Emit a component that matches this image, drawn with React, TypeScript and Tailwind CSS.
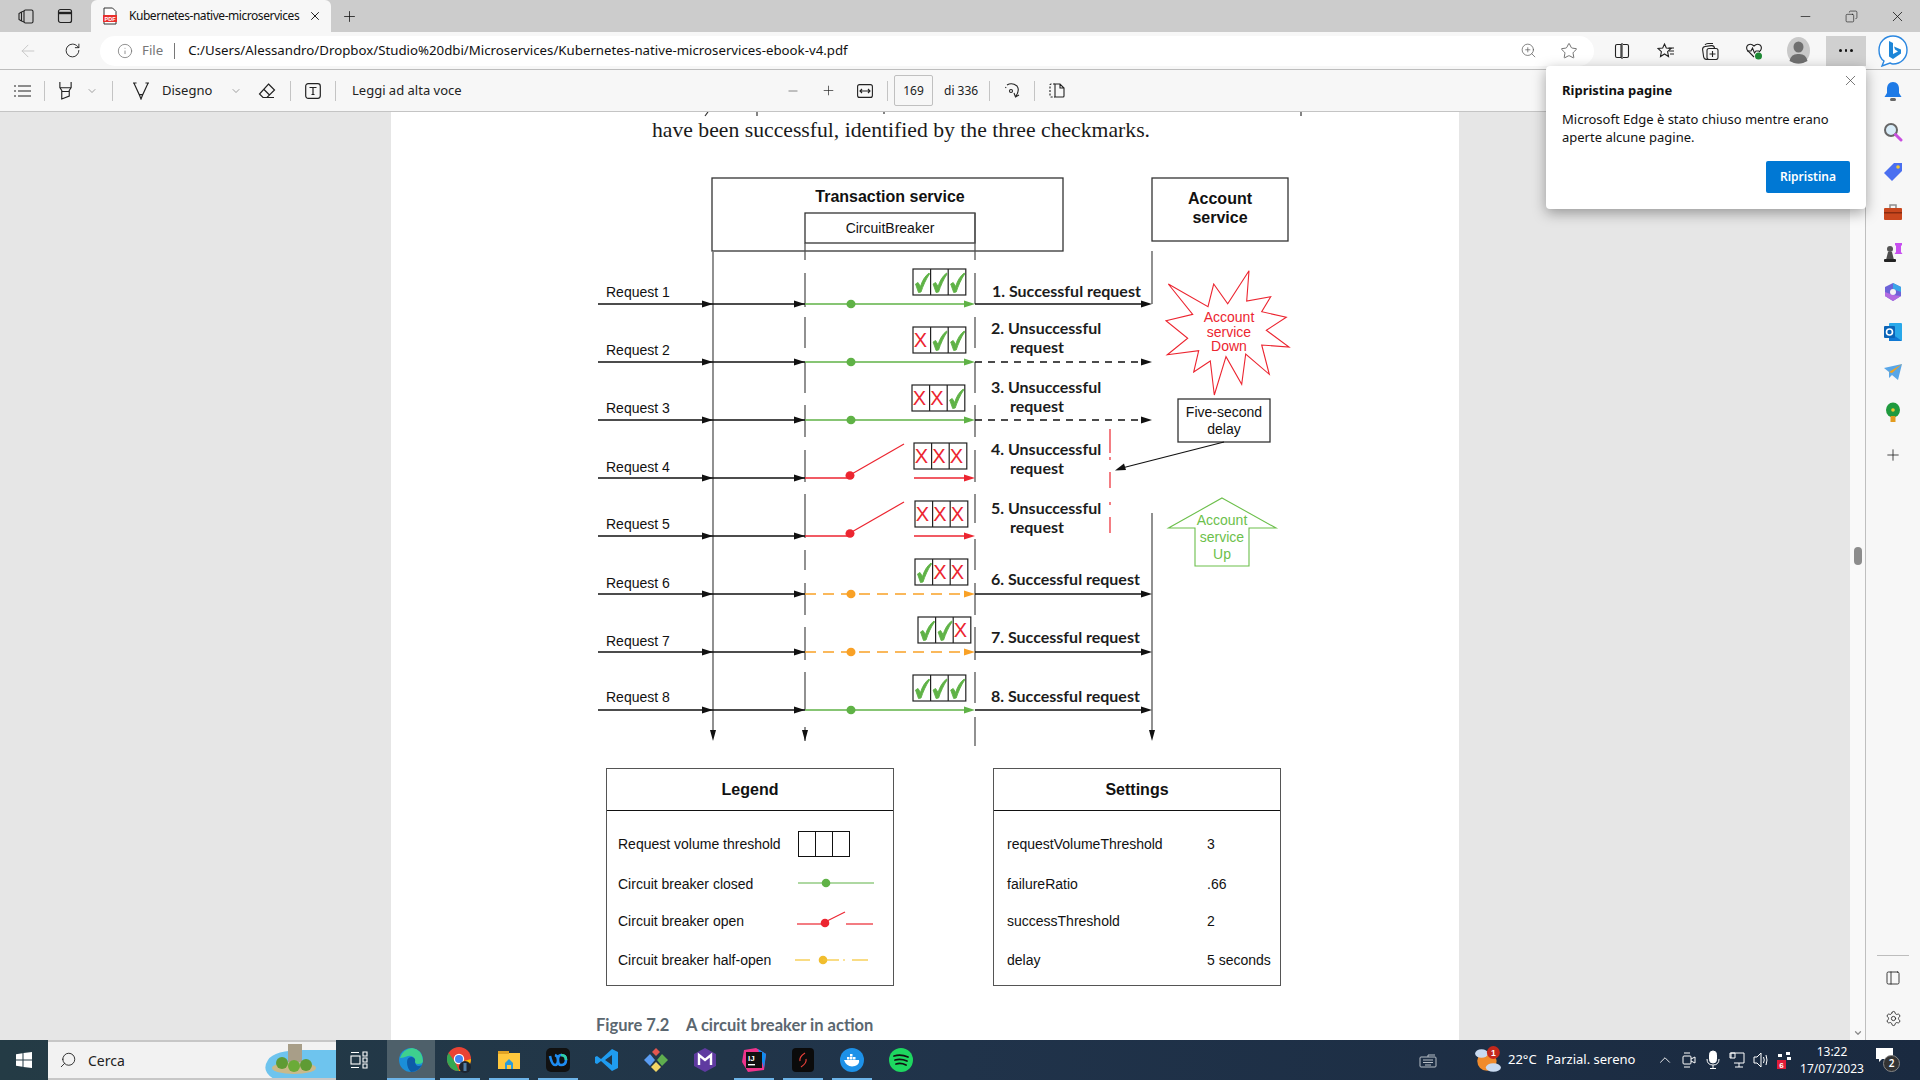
import {
  ArrowLeft,
  ChevronDown,
  ChevronUp,
  Copy,
  Info,
  Minus,
  PanelRight,
  Plus,
  RotateCw,
  Search,
  Settings,
  Star,
  X,
  ZoomIn,
} from 'lucide-react'
import type { ReactNode } from 'react'

const GREEN = '#5fb246'
const RED = '#ec2530'
const ORANGE = '#f9a126'
const LINE = '#111111'
const SANS = '"Liberation Sans", Arial, sans-serif'
const LABEL = 'Lato, "Open Sans", sans-serif'

type Mark = 'c' | 'x'
type Row = {
  y: number
  name: string
  labelY: number
  boxX: number
  boxY: number
  marks: Mark[]
  mode: 'closed' | 'open' | 'half'
  downstream: 'solid' | 'dash'
  lines: { text: string; x: number; y: number }[]
}

const rows: Row[] = [
  { y: 304, name: 'Request 1', labelY: 297, boxX: 913, boxY: 269, marks: ['c', 'c', 'c'], mode: 'closed', downstream: 'solid', lines: [{ text: '1. Successful request', x: 992, y: 297 }] },
  { y: 362, name: 'Request 2', labelY: 355, boxX: 913, boxY: 327, marks: ['x', 'c', 'c'], mode: 'closed', downstream: 'dash', lines: [{ text: '2. Unsuccessful', x: 991, y: 334 }, { text: 'request', x: 1010, y: 353 }] },
  { y: 420, name: 'Request 3', labelY: 413, boxX: 912, boxY: 385, marks: ['x', 'x', 'c'], mode: 'closed', downstream: 'dash', lines: [{ text: '3. Unsuccessful', x: 991, y: 393 }, { text: 'request', x: 1010, y: 412 }] },
  { y: 478, name: 'Request 4', labelY: 472, boxX: 914, boxY: 443, marks: ['x', 'x', 'x'], mode: 'open', downstream: 'solid', lines: [{ text: '4. Unsuccessful', x: 991, y: 455 }, { text: 'request', x: 1010, y: 474 }] },
  { y: 536, name: 'Request 5', labelY: 529, boxX: 915, boxY: 501, marks: ['x', 'x', 'x'], mode: 'open', downstream: 'solid', lines: [{ text: '5. Unsuccessful', x: 991, y: 514 }, { text: 'request', x: 1010, y: 533 }] },
  { y: 594, name: 'Request 6', labelY: 588, boxX: 915, boxY: 559, marks: ['c', 'x', 'x'], mode: 'half', downstream: 'solid', lines: [{ text: '6. Successful request', x: 991, y: 585 }] },
  { y: 652, name: 'Request 7', labelY: 646, boxX: 918, boxY: 617, marks: ['c', 'c', 'x'], mode: 'half', downstream: 'solid', lines: [{ text: '7. Successful request', x: 991, y: 643 }] },
  { y: 710, name: 'Request 8', labelY: 702, boxX: 913, boxY: 675, marks: ['c', 'c', 'c'], mode: 'closed', downstream: 'solid', lines: [{ text: '8. Successful request', x: 991, y: 702 }] },
]

const starPoints = [
  [297, 32], [233, 131], [191, 72], [174, 140], [55, 72], [128, 163], [48, 182], [113, 235],
  [52, 284], [146, 272], [131, 336], [181, 303], [193, 405], [228, 290], [275, 373], [287, 282],
  [358, 343], [335, 255], [417, 261], [349, 211], [409, 172], [335, 155], [362, 110], [290, 123],
]
  .map(([x, y]) => `${(1150 + x / 3).toFixed(1)},${(260 + y / 3).toFixed(1)}`)
  .join(' ')

const breakerDashes = [
  [243, 260], [273, 307], [317, 348], [362, 393], [405, 437], [450, 482], [494, 538], [550, 570],
  [583, 615], [627, 660], [672, 710], [727, 741],
]
const serviceDashes = [
  [213, 260], [273, 304], [317, 348], [362, 393], [405, 437], [450, 482], [494, 523], [539, 570],
  [583, 615], [627, 660], [672, 703], [717, 746],
]

const ArrowHead = ({ x, y, color }: { x: number; y: number; color: string }) => (
  <polygon points={`${x},${y} ${x - 11},${y - 3.5} ${x - 11},${y + 3.5}`} fill={color} />
)

const DownHead = ({ x, y }: { x: number; y: number }) => (
  <polygon points={`${x},${y} ${x - 3},${y - 11} ${x + 3},${y - 11}`} fill={LINE} />
)

const Check = ({ x, y }: { x: number; y: number }) => (
  <path
    d={`M${x + 2.5} ${y + 15} l2.5 -1.5 l2.5 4 C${x + 9} ${y + 12} ${x + 12} ${y + 7} ${x + 16} ${y + 4} l0.5 1 C${x + 13} ${y + 10} ${x + 10} ${y + 17} ${x + 8} ${y + 23} l-2.5 0.5 z`}
    fill={GREEN}
    stroke={GREEN}
    strokeWidth={0.9}
    strokeLinejoin="round"
  />
)

const MarkBox = ({ x, y, marks, w = 17.6, h = 26 }: { x: number; y: number; marks: Mark[]; w?: number; h?: number }) => (
  <g>
    <rect x={x} y={y} width={w * 3} height={h} fill="#fff" stroke="#222" strokeWidth={1.2} />
    <line x1={x + w} x2={x + w} y1={y} y2={y + h} stroke="#222" strokeWidth={1.2} />
    <line x1={x + w * 2} x2={x + w * 2} y1={y} y2={y + h} stroke="#222" strokeWidth={1.2} />
    {marks.map((mark, idx) =>
      mark === 'c' ? (
        <Check key={idx} x={x + idx * w} y={y} />
      ) : (
        <text key={idx} x={x + idx * w + w / 2 - 1.5} y={y + 20} fontSize={20} textAnchor="middle" fill={RED} fontFamily={SANS}>
          X
        </text>
      ),
    )}
  </g>
)

const Diagram = () => (
  <svg width={1068} height={602} viewBox="391 160 1068 602" className="block" fontFamily={SANS}>
    <rect x={712} y={178} width={351} height={73} fill="none" stroke="#333" strokeWidth={1.3} />
    <text x={890} y={201.5} fontSize={16} fontWeight={700} textAnchor="middle" fill="#111">Transaction service</text>
    <rect x={805} y={213} width={170} height={30} fill="none" stroke="#333" strokeWidth={1.3} />
    <text x={890} y={233} fontSize={14} textAnchor="middle" fill="#111">CircuitBreaker</text>
    <rect x={1152} y={178} width={136} height={63} fill="none" stroke="#333" strokeWidth={1.3} />
    <text x={1220} y={204} fontSize={16} fontWeight={700} textAnchor="middle" fill="#111">Account</text>
    <text x={1220} y={223} fontSize={16} fontWeight={700} textAnchor="middle" fill="#111">service</text>

    {/* lifelines */}
    <line x1={713} x2={713} y1={252} y2={735} stroke="#555" strokeWidth={1.3} />
    <DownHead x={713} y={741} />
    {breakerDashes.map(([a, b]) => (
      <line key={a} x1={805} x2={805} y1={a} y2={b} stroke="#555" strokeWidth={1.3} />
    ))}
    <DownHead x={805} y={741} />
    {serviceDashes.map(([a, b]) => (
      <line key={a} x1={975} x2={975} y1={a} y2={b} stroke="#555" strokeWidth={1.3} />
    ))}
    <line x1={1152} x2={1152} y1={251} y2={304} stroke="#555" strokeWidth={1.3} />
    <line x1={1152} x2={1152} y1={513} y2={735} stroke="#555" strokeWidth={1.3} />
    <DownHead x={1152} y={741} />

    {rows.map((row) => (
      <g key={row.name}>
        <text x={606} y={row.labelY} fontSize={14} fill="#111">{row.name}</text>
        <line x1={598} x2={805} y1={row.y} y2={row.y} stroke={LINE} strokeWidth={1.3} />
        <ArrowHead x={713} y={row.y} color={LINE} />
        <ArrowHead x={805} y={row.y} color={LINE} />
        {row.mode === 'closed' && (
          <>
            <line x1={805} x2={968} y1={row.y} y2={row.y} stroke={GREEN} strokeWidth={1.6} />
            <ArrowHead x={975} y={row.y} color={GREEN} />
            <ellipse cx={851} cy={row.y} rx={4.5} ry={4.3} fill={GREEN} />
          </>
        )}
        {row.mode === 'half' && (
          <>
            <line x1={805} x2={968} y1={row.y} y2={row.y} stroke={ORANGE} strokeWidth={1.6} strokeDasharray="11 7" />
            <ArrowHead x={975} y={row.y} color={ORANGE} />
            <ellipse cx={851} cy={row.y} rx={4.5} ry={4.3} fill={ORANGE} />
          </>
        )}
        {row.mode === 'open' && (
          <>
            <line x1={805} x2={848} y1={row.y} y2={row.y} stroke={RED} strokeWidth={1.4} />
            <line x1={850} x2={904} y1={row.y - 3} y2={row.y - 34} stroke={RED} strokeWidth={1.2} />
            <ellipse cx={850} cy={row.y - 2.5} rx={4.5} ry={4.3} fill={RED} />
            <line x1={914} x2={968} y1={row.y} y2={row.y} stroke={RED} strokeWidth={1.4} />
            <ArrowHead x={975} y={row.y} color={RED} />
          </>
        )}
        <MarkBox x={row.boxX} y={row.boxY} marks={row.marks} />
        {row.mode !== 'open' && (
          <>
            <line
              x1={975}
              x2={1145}
              y1={row.y}
              y2={row.y}
              stroke={LINE}
              strokeWidth={1.3}
              strokeDasharray={row.downstream === 'dash' ? '7 6' : undefined}
            />
            <ArrowHead x={1152} y={row.y} color={LINE} />
          </>
        )}
        {row.lines.map((line) => (
          <text key={line.text} x={line.x} y={line.y} fontSize={16} fontWeight={700} fontFamily={LABEL} fill="#1c1c1c">
            {line.text}
          </text>
        ))}
      </g>
    ))}

    {/* red dashed barrier */}
    {[[429, 453], [457, 460], [472, 488], [502, 505], [517, 533]].map(([a, b]) => (
      <line key={a} x1={1110} x2={1110} y1={a} y2={b} stroke={RED} strokeWidth={1.2} />
    ))}

    <polygon points={starPoints} fill="#fff" stroke={RED} strokeWidth={1.1} />
    <text x={1229} y={322} fontSize={14} textAnchor="middle" fill={RED}>Account</text>
    <text x={1229} y={337} fontSize={14} textAnchor="middle" fill={RED}>service</text>
    <text x={1229} y={351} fontSize={14} textAnchor="middle" fill={RED}>Down</text>

    <rect x={1178} y={399} width={92} height={43} fill="#fff" stroke="#333" strokeWidth={1.3} />
    <text x={1224} y={417} fontSize={14} textAnchor="middle" fill="#111">Five-second</text>
    <text x={1224} y={434} fontSize={14} textAnchor="middle" fill="#111">delay</text>
    <line x1={1224} x2={1122} y1={442} y2={468} stroke={LINE} strokeWidth={1.2} />
    <polygon points="1115,470.5 1124,463.5 1126,470" fill={LINE} />

    <polygon
      points="1222,498 1276,528 1249,528 1249,566 1195,566 1195,528 1168.5,528"
      fill="#fff"
      stroke="#6cbf4b"
      strokeWidth={1.1}
    />
    <text x={1222} y={525} fontSize={14} textAnchor="middle" fill="#6cbf4b">Account</text>
    <text x={1222} y={542} fontSize={14} textAnchor="middle" fill="#6cbf4b">service</text>
    <text x={1222} y={559} fontSize={14} textAnchor="middle" fill="#6cbf4b">Up</text>
  </svg>
)

const PanelBox = ({ title, children }: { title: string; children: ReactNode }) => (
  <div className="w-[288px] h-[218px] border-[1.5px] border-[#555] flex flex-col">
    <div className="h-[42px] shrink-0 border-b-[1.5px] border-[#111] flex items-center justify-center text-[16px] font-bold text-[#111]">
      {title}
    </div>
    {children}
  </div>
)

const Legend = () => (
  <PanelBox title="Legend">
    <div className="pl-[11px] text-[14px] text-[#111] flex flex-col">
      <div className="h-[26px] mt-[20px] flex items-center justify-between pr-[43px]">
        <span>Request volume threshold</span>
        <div className="flex w-[52px] h-[26px] border border-[#111]">
          <div className="flex-1 border-r border-[#111]" />
          <div className="flex-1 border-r border-[#111]" />
          <div className="flex-1" />
        </div>
      </div>
      <div className="mt-[14px] h-[26px] flex items-center justify-between pr-[19px]">
        <span>Circuit breaker closed</span>
        <svg width={76} height={14} viewBox="0 0 76 14">
          <line x1={0} x2={76} y1={6} y2={6} stroke={GREEN} strokeWidth={1.2} />
          <circle cx={28} cy={6} r={4.3} fill={GREEN} />
        </svg>
      </div>
      <div className="mt-[11px] h-[26px] flex items-center justify-between pr-[20px]">
        <span>Circuit breaker open</span>
        <svg width={76} height={20} viewBox="0 0 76 20">
          <line x1={0} x2={26} y1={13} y2={13} stroke={RED} strokeWidth={1.2} />
          <line x1={28} x2={48} y1={11} y2={1} stroke={RED} strokeWidth={1.2} />
          <circle cx={28} cy={12} r={4.3} fill={RED} />
          <line x1={49} x2={76} y1={13} y2={13} stroke={RED} strokeWidth={1.2} />
        </svg>
      </div>
      <div className="mt-[13px] h-[26px] flex items-center justify-between pr-[25px]">
        <span>Circuit breaker half-open</span>
        <svg width={73} height={14} viewBox="0 0 73 14">
          <line x1={0} x2={15} y1={7} y2={7} stroke="#f5c533" strokeWidth={1.2} />
          <circle cx={28} cy={7} r={4.3} fill="#f1bd2d" />
          <line x1={28} x2={44} y1={7} y2={7} stroke="#f5c533" strokeWidth={1.2} />
          <line x1={48} x2={50} y1={7} y2={7} stroke="#f5c533" strokeWidth={1.2} />
          <line x1={57} x2={73} y1={7} y2={7} stroke="#f5c533" strokeWidth={1.2} />
        </svg>
      </div>
    </div>
  </PanelBox>
)

const settingsRows = [
  { name: 'requestVolumeThreshold', value: '3', mt: 'mt-[20px]' },
  { name: 'failureRatio', value: '.66', mt: 'mt-[14px]' },
  { name: 'successThreshold', value: '2', mt: 'mt-[11px]' },
  { name: 'delay', value: '5 seconds', mt: 'mt-[13px]' },
]

const SettingsBox = () => (
  <PanelBox title="Settings">
    <div className="pl-[13px] text-[14px] text-[#111] flex flex-col">
      {settingsRows.map((row) => (
        <div key={row.name} className={`h-[26px] flex items-center ${row.mt}`}>
          <span className="w-[200px]">{row.name}</span>
          <span>{row.value}</span>
        </div>
      ))}
    </div>
  </PanelBox>
)

const Sep = ({ className = '' }: { className?: string }) => <div className={`w-px h-[20px] bg-[#c4c4c4] ${className}`} />

const IconSlot = ({ w, className = '', children }: { w: number; className?: string; children: ReactNode }) => (
  <div className={`shrink-0 flex items-center justify-center ${className}`} style={{ width: w }}>
    {children}
  </div>
)

const TabBar = () => (
  <div className="h-[32px] bg-[#cccccc] flex items-end shrink-0 relative">
    <IconSlot w={45} className="h-[32px] pl-[6px]">
      <svg width={18} height={18} viewBox="0 0 18 18" fill="none" stroke="#222" strokeWidth={1.1}>
        <rect x={7} y={3} width={9} height={13} rx={1.5} />
        <path d="M7 4 L4.5 5 V14 L7 15 M4.5 5 L2 6.5 V12.5 L4.5 14" />
      </svg>
    </IconSlot>
    <IconSlot w={40} className="h-[32px]">
      <svg width={16} height={16} viewBox="0 0 16 16" fill="none" stroke="#222" strokeWidth={1.2}>
        <rect x={1.5} y={1.5} width={13} height={13} rx={2} />
        <path d="M1.5 5 H14.5" strokeWidth={2.4} />
      </svg>
    </IconSlot>
    <div className="ml-[6px] w-[240px] h-[32px] bg-[#f7f7f7] rounded-t-[6px] flex items-center pl-[11px] font-['Noto_Sans'] text-[12px] text-[#111]">
      <svg width={16} height={18} viewBox="0 0 16 18" className="shrink-0">
        <path d="M2 1 H10.5 L14 4.5 V17 H2 Z" fill="#fff" stroke="#333" strokeWidth={1} />
        <rect x={1} y={8} width={14} height={7} fill="#e8302d" />
        <text x={8} y={13.6} fontSize={5.5} fontWeight={700} fill="#fff" textAnchor="middle" fontFamily={SANS}>PDF</text>
      </svg>
      <span className="ml-[11px] w-[172px] whitespace-nowrap tracking-[-0.45px]">Kubernetes-native-microservices</span>
      <X size={14} strokeWidth={1.6} className="ml-[7px] text-[#111]" />
    </div>
    <IconSlot w={36} className="h-[32px]">
      <Plus size={17} strokeWidth={1.1} className="text-[#111]" />
    </IconSlot>
    <div className="ml-auto flex h-[32px] items-center text-[#111]">
      <IconSlot w={46}><Minus size={15} strokeWidth={1.1} /></IconSlot>
      <IconSlot w={46}><Copy size={13} strokeWidth={1.1} className="-scale-x-100" /></IconSlot>
      <IconSlot w={46}><X size={17} strokeWidth={1.1} /></IconSlot>
    </div>
  </div>
)

const AddressBar = () => (
  <div className="h-[38px] bg-[#f7f7f7] flex items-center shrink-0 border-b border-[#bdbdbd]">
    <IconSlot w={54} className="pl-[2px]"><ArrowLeft size={20} strokeWidth={1.1} className="text-[#c4c4c4]" /></IconSlot>
    <IconSlot w={36}><RotateCw size={17} strokeWidth={1.3} className="text-[#222]" /></IconSlot>
    <div className="ml-[10px] w-[1498px] h-[30px] rounded-full bg-white flex items-center font-['Noto_Sans'] text-[13.25px] text-[#111] whitespace-nowrap">
      <Info size={16} strokeWidth={1.2} className="ml-[17px] text-[#777] shrink-0" />
      <span className="ml-[9px] text-[#777]">File</span>
      <div className="ml-[11px] w-px h-[16px] bg-[#777]" />
      <span className="ml-[13px]">C:/Users/Alessandro/Dropbox/Studio%20dbi/Microservices/Kubernetes-native-microservices-ebook-v4.pdf</span>
      <ZoomIn size={17} strokeWidth={1} className="ml-auto text-[#555] shrink-0" />
      <Star size={18} strokeWidth={1} className="ml-[23px] mr-[16px] text-[#444] shrink-0" />
    </div>
    <IconSlot w={56}>
      <svg width={16} height={16} viewBox="0 0 16 16" fill="none" stroke="#222" strokeWidth={1.1}>
        <path d="M7 1.5 H3 Q1.5 1.5 1.5 3 V13 Q1.5 14.5 3 14.5 H7 Z M9 1.5 H13 Q14.5 1.5 14.5 3 V13 Q14.5 14.5 13 14.5 H9" />
        <path d="M8 0 V16" />
      </svg>
    </IconSlot>
    <IconSlot w={32}>
      <svg width={18} height={18} viewBox="0 0 18 18" fill="none" stroke="#222" strokeWidth={1.1}>
        <path d="M7.5 2 L9.3 6 L14 6.5 L10.6 9.6 L11.5 14.5 L7.5 12 L3.5 14.5 L4.4 9.6 L1 6.5 L5.7 6 Z" />
        <path d="M12 9 H17 M13 12 H17 M11.5 6 H17" />
      </svg>
    </IconSlot>
    <IconSlot w={56}>
      <svg width={18} height={18} viewBox="0 0 18 18" fill="none" stroke="#222" strokeWidth={1.1}>
        <path d="M4 3 Q5 1.5 7 1.5 H12" />
        <rect x={2} y={4} width={12} height={13} rx={3} transform="rotate(-8 8 10)" />
        <rect x={6} y={6.5} width={11} height={11} rx={2} fill="#f7f7f7" />
        <path d="M11.5 9 V15 M8.5 12 H14.5" />
      </svg>
    </IconSlot>
    <IconSlot w={32}>
      <svg width={18} height={18} viewBox="0 0 18 18" fill="none" stroke="#222" strokeWidth={1.1}>
        <path d="M9 15 L2.5 8.5 Q0.5 5 3 3 Q6 1 9 4 Q12 1 15 3 Q17.5 5 15.5 8.5 L14 10" />
        <path d="M2 9 H6 L7.5 6 L9.5 11 L11 9 H14" />
        <circle cx={13.5} cy={14} r={3.5} fill="#1f8a36" stroke="none" />
      </svg>
    </IconSlot>
    <IconSlot w={56}>
      <svg width={23} height={27} viewBox="0 0 23 27">
        <ellipse cx={11.5} cy={13.5} rx={11.5} ry={13.5} fill="#c9c9c9" />
        <ellipse cx={11.5} cy={10} rx={5} ry={5.5} fill="#6f6f6f" />
        <path d="M2.5 24 Q4 16.5 11.5 17 Q19 16.5 20.5 24 Q11.5 29 2.5 24Z" fill="#6f6f6f" />
      </svg>
    </IconSlot>
    <div className="w-[40px] h-[30px] bg-[#d0d0d0] shrink-0 flex items-center justify-center gap-[3px]">
      <div className="w-[2.5px] h-[2.5px] rounded-full bg-[#111]" />
      <div className="w-[2.5px] h-[2.5px] rounded-full bg-[#111]" />
      <div className="w-[2.5px] h-[2.5px] rounded-full bg-[#111]" />
    </div>
    <IconSlot w={54}>
      <svg width={30} height={32} viewBox="0 0 30 32">
        <path d="M15 1 C7 1 1 7 1 15 C1 20 3 24 6 26 L4 31 L12 28 Q14 29 15 29 C23 29 29 23 29 15 C29 7 23 1 15 1Z" fill="#fff" stroke="#2b87e0" strokeWidth={1.4} />
        <path d="M11 6 L15 8 V19 L20 16.5 L17 14.5 L16 11.5 L23 14.5 V18.5 L15 24 L11 21.5 Z" fill="#1d86d8" />
      </svg>
    </IconSlot>
  </div>
)

const PdfToolbar = () => (
  <div className="h-[42px] bg-[#f7f7f7] border-b border-[#c4c4c4] flex items-center shrink-0 font-['Noto_Sans'] text-[13px] text-[#222] pr-[54px] whitespace-nowrap">
    <IconSlot w={44}>
      <svg width={18} height={14} viewBox="0 0 18 14" stroke="#222" strokeWidth={1.2}>
        <path d="M5 2 H18 M5 7 H18 M5 12 H18 M1 2 H3 M1 7 H3 M1 12 H3" />
      </svg>
    </IconSlot>
    <Sep />
    <IconSlot w={41}>
      <svg width={15} height={19} viewBox="0 0 16 20" fill="none" stroke="#222" strokeWidth={1.2}>
        <path d="M2 1 V7 L4 10 V19 L12 16 V10 L14 7 V1 M2 7 H14 M4 11 H12" />
      </svg>
    </IconSlot>
    <ChevronDown size={12} strokeWidth={1.1} className="text-[#555]" />
    <Sep className="ml-[14px]" />
    <IconSlot w={56}>
      <svg width={16} height={18} viewBox="0 0 18 20" fill="none" stroke="#222" strokeWidth={1.3}>
        <path d="M1 1 L7 14 H11 L17 1 M0 1 H4 M14 1 H18 M7 14 L9 19 L11 14" />
      </svg>
    </IconSlot>
    <span className="ml-[-7px] w-[60px]">Disegno</span>
    <ChevronDown size={12} strokeWidth={1.1} className="text-[#555] ml-[8px]" />
    <IconSlot w={50}>
      <svg width={18} height={18} viewBox="0 0 18 18" fill="none" stroke="#222" strokeWidth={1.2}>
        <path d="M10.5 2 L16.5 8 L9 15.5 H5 L1.5 12 Z M5.5 7 L11.5 13 M5 15.5 H16" />
      </svg>
    </IconSlot>
    <Sep className="ml-[-2px]" />
    <IconSlot w={44}>
      <svg width={16} height={16} viewBox="0 0 16 16" fill="none" stroke="#222" strokeWidth={1.2}>
        <rect x={0.7} y={0.7} width={14.6} height={14.6} rx={2.5} />
        <path d="M4.5 4.5 H11.5 M8 4.5 V11.5 M6.5 11.5 H9.5" />
      </svg>
    </IconSlot>
    <Sep />
    <span className="ml-[16px] w-[430px]">Leggi ad alta voce</span>
    <IconSlot w={22}><Minus size={14} strokeWidth={1.5} className="text-[#777]" /></IconSlot>
    <IconSlot w={48}><Plus size={15} strokeWidth={1.1} /></IconSlot>
    <IconSlot w={26}>
      <svg width={16} height={14} viewBox="0 0 16 14" fill="none" stroke="#222" strokeWidth={1.1}>
        <rect x={0.6} y={0.6} width={14.8} height={12.8} rx={2} />
        <path d="M3 7 H13 M5 5 L3 7 L5 9 M11 5 L13 7 L11 9" />
      </svg>
    </IconSlot>
    <Sep className="ml-[9px]" />
    <div className="ml-[6px] w-[39px] h-[31px] border border-[#c0c0c0] rounded-[2px] flex items-center justify-center text-[12px]">169</div>
    <span className="ml-[11px] text-[12px] w-[34px]">di 336</span>
    <Sep className="ml-[11px]" />
    <IconSlot w={44}>
      <svg width={16} height={18} viewBox="0 0 16 18" fill="none" stroke="#222" strokeWidth={1.1}>
        <path d="M3 3 Q8 0 13 4 Q16 8 12 14 M10 11 L11.5 15 L15 13" />
        <circle cx={7} cy={9} r={1.5} />
        <path d="M1.5 6 L2 5" />
      </svg>
    </IconSlot>
    <Sep />
    <IconSlot w={44}>
      <svg width={16} height={15} viewBox="0 0 16 15" fill="none" stroke="#222" strokeWidth={1.1}>
        <path d="M6 1 H2 Q1 1 1 2 V13 Q1 14 2 14 H6" strokeDasharray="2 1.5" />
        <path d="M6 1 H11 L15 5 V13 Q15 14 14 14 H6 Z M11 1 V5 H15" />
      </svg>
    </IconSlot>
  </div>
)

const NotificationCard = () => (
  <div className="absolute left-[1546px] top-[66px] w-[320px] h-[143px] bg-white rounded-[4px] shadow-[0_4px_14px_rgba(0,0,0,0.35)] font-['Noto_Sans'] text-[#111] pl-[16px] pt-[14px]">
    <X size={17} strokeWidth={1} className="absolute right-[7px] top-[6px] text-[#444]" />
    <div className="text-[13px] font-bold leading-[20px]">Ripristina pagine</div>
    <div className="mt-[10px] text-[13px] leading-[18px] w-[270px]">Microsoft Edge è stato chiuso mentre erano aperte alcune pagine.</div>
    <button className="absolute right-[16px] bottom-[16px] w-[84px] h-[32px] rounded-[2px] bg-[#0078d4] text-white text-[12px] font-semibold">
      Ripristina
    </button>
  </div>
)

const PdfPage = () => (
  <div className="ml-[391px] w-[1068px] bg-white shrink-0 h-full overflow-hidden relative">
    {/* descenders of the line scrolled out above */}
    <svg width={1068} height={5} className="absolute left-0 top-0" stroke="#333" strokeWidth={1.2}>
      <path d="M317 0 L314 4 M366 0 V4 M493 0 V2 M910 0 V4" />
    </svg>
    <div className="h-[48px]">
      <p className="pl-[261px] font-['Liberation_Serif'] text-[21.7px] leading-[30px] pt-[3px] text-[#1a1a1a] whitespace-nowrap">
        have been successful, identified by the three checkmarks.
      </p>
    </div>
    <Diagram />
    <div className="mt-[6px] pl-[215px] flex gap-[99px] font-['Liberation_Sans']">
      <Legend />
      <SettingsBox />
    </div>
    <div className="mt-[29px] pl-[205px] font-['Lato'] font-bold text-[16.5px] leading-[20px] text-[#5b6770] whitespace-nowrap">
      <span className="inline-block w-[90px]">Figure 7.2</span>
      <span>A circuit breaker in action</span>
    </div>
  </div>
)

const Scrollbar = () => (
  <div className="absolute left-[1850px] top-0 bottom-0 w-[15px] bg-[#f9f9f9] flex flex-col items-center">
    <div className="mt-[435px] w-[8px] h-[18px] rounded-full bg-[#8c8c8c]" />
    <ChevronDown size={10} strokeWidth={3} className="mt-auto mb-[2px] text-[#8c8c8c]" />
  </div>
)

const Sidebar = () => (
  <div className="w-[55px] shrink-0 bg-[#f7f7f7] border-l border-[#bfbfbf] flex flex-col items-center pt-[12px]">
    <div className="flex flex-col items-center gap-[20px]">
      <svg width={20} height={20} viewBox="0 0 20 20">
        <path d="M10 0 C6 0 4 3 4 7 V11 L1.5 15 H18.5 L16 11 V7 C16 3 14 0 10 0Z" fill="#1e7ae6" />
        <rect x={7} y={16} width={6} height={3} rx={1.5} fill="#666" />
      </svg>
      <svg width={20} height={20} viewBox="0 0 20 20">
        <circle cx={8} cy={8} r={6} fill="#d8ecf8" stroke="#666" strokeWidth={2} />
        <path d="M12.5 12.5 L18 18" stroke="#c94fe0" strokeWidth={3} strokeLinecap="round" />
      </svg>
      <svg width={20} height={20} viewBox="0 0 20 20">
        <path d="M11 1 H19 V9 L9 19 L1 11 Z" fill="#4a6ff0" />
        <circle cx={15} cy={5} r={1.8} fill="#f2c830" />
      </svg>
      <svg width={20} height={20} viewBox="0 0 20 20">
        <rect x={1} y={6} width={18} height={12} rx={1} fill="#c9471e" />
        <path d="M7 6 V3 H13 V6" fill="none" stroke="#8d8d8d" strokeWidth={1.5} />
        <rect x={1} y={10} width={18} height={1.5} fill="#8b2c10" />
      </svg>
      <svg width={20} height={20} viewBox="0 0 20 20">
        <path d="M12 1 H19 V3 L18 4 V10 L19.5 12 H11.5 L13 10 V4 L12 3Z" fill="#c84ff0" />
        <circle cx={7} cy={7} r={3} fill="#555" />
        <path d="M5 10 H9 L11 18 H3Z" fill="#4d4d4d" />
        <rect x={1} y={17} width={12} height={3} rx={1} fill="#222" />
      </svg>
      <svg width={20} height={20} viewBox="0 0 20 20">
        <path d="M10 1 L18 5 V14 L10 19 L2 14 V5Z" fill="#6d63d8" />
        <path d="M10 1 L18 5 V10 L10 7Z" fill="#3aa6e8" />
        <path d="M2 10 V14 L10 19 L18 14 L10 13Z" fill="#b36be0" />
        <circle cx={10} cy={10} r={3} fill="#f5f5f5" />
      </svg>
      <svg width={20} height={20} viewBox="0 0 20 20">
        <rect x={6} y={1} width={13} height={18} rx={1} fill="#28a8ea" />
        <path d="M6 10 L19 19 H6Z" fill="#0f78d4" />
        <rect x={1} y={4} width={11} height={12} rx={1} fill="#0a64b8" />
        <circle cx={6.5} cy={10} r={3} fill="none" stroke="#fff" strokeWidth={1.6} />
      </svg>
      <svg width={20} height={20} viewBox="0 0 20 20">
        <path d="M1 6 L19 2 L15 18 L9 13 L6 16 L6 10Z" fill="#58a6e8" />
        <path d="M6 10 L19 2 L9 11Z" fill="#f2a31c" />
      </svg>
      <svg width={20} height={20} viewBox="0 0 20 20">
        <ellipse cx={10} cy={8} rx={7} ry={7.5} fill="#1f9a3e" />
        <rect x={7.5} y={14} width={5} height={6} fill="#e39b1e" />
        <circle cx={10} cy={8} r={1.8} fill="#f2c830" />
      </svg>
      <Plus size={18} strokeWidth={1.1} className="mt-[4px] text-[#222]" />
    </div>
    <div className="mt-auto w-[32px] border-t border-[#bdbdbd] mb-[14px]" />
    <PanelRight size={16} strokeWidth={1.3} className="text-[#222] mb-[24px] -scale-x-100" />
    <Settings size={17} strokeWidth={1.2} className="text-[#222] mb-[13px]" />
  </div>
)

const TaskIcon = ({ active, running, children }: { active?: boolean; running?: boolean; children: ReactNode }) => (
  <div className={`relative h-[40px] flex items-center justify-center shrink-0 ${active ? 'bg-[#4e606a] w-[48px] ml-[-4px] mr-[5px]' : 'w-[40px] mr-[9px]'}`}>
    {children}
    {running && <div className="absolute left-0 right-0 bottom-0 h-[2px] bg-[#6db4e8]" />}
  </div>
)

const TraySlot = ({ children }: { children: ReactNode }) => (
  <div className="w-[24px] shrink-0 flex items-center justify-center">{children}</div>
)

const Taskbar = () => (
  <div className="h-[40px] shrink-0 bg-linear-to-r from-[#243b45] via-[#20334a] to-[#1a2a40] flex items-center font-['Noto_Sans'] text-white">
    <div className="w-[48px] flex justify-center shrink-0">
      <svg width={16} height={16} viewBox="0 0 16 16" fill="#fff">
        <path d="M0 2.2 L6.5 1.3 V7.5 H0Z M7.5 1.1 L16 0 V7.5 H7.5Z M0 8.5 H6.5 V14.7 L0 13.8Z M7.5 8.5 H16 V16 L7.5 14.9Z" />
      </svg>
    </div>
    <div className="w-[288px] h-[40px] bg-[#f2f2f2] border-y-2 border-[#c7c7c7] flex items-center text-[#222] text-[14px] relative overflow-hidden shrink-0">
      <Search size={18} strokeWidth={1.2} className="ml-[11px] -scale-x-100" />
      <span className="ml-[11px]">Cerca</span>
      <svg width={72} height={40} viewBox="0 0 72 40" className="absolute right-0 top-[-2px]">
        <path d="M40 10 H72 V40 H12 Q-4 32 4 20 Q10 10 40 10Z" fill="#6ec4ee" />
        <rect x={24} y={4} width={14} height={18} fill="#a89e88" />
        <ellipse cx={30} cy={28} rx={22} ry={6} fill="#c9b98a" />
        <circle cx={18} cy={23} r={6} fill="#5f9b34" />
        <circle cx={30} cy={26} r={6} fill="#6bab38" />
        <circle cx={42} cy={25} r={6} fill="#5f9b34" />
      </svg>
    </div>
    <div className="w-[48px] ml-[-1px] flex justify-center shrink-0">
      <svg width={18} height={18} viewBox="0 0 18 18" fill="none" stroke="#fff" strokeWidth={1.1}>
        <rect x={1} y={5} width={9} height={8} />
        <path d="M1 1.5 H9 M1 16.5 H9 M13 1 H17 V5 H13Z M13 7 H17 V11 H13Z M13 13 H17 V17 H13Z" />
      </svg>
    </div>
    <div className="flex items-center ml-[8px]">
      <TaskIcon active running>
        <svg width={24} height={24} viewBox="0 0 24 24">
          <circle cx={12} cy={12} r={12} fill="#1b8fd8" />
          <path d="M1 10 Q4 1 13 0 Q23 1 24 13 Q24 16 19 16 Q15 16 16 12 Q14 7 9 8 Q4 10 1 10Z" fill="#3ed08e" />
          <path d="M8 14 Q8 9 13 9 Q17 10 16 14 Q17 20 23 17 Q19 24 12 24 Q8 20 8 14Z" fill="#0d5ca8" />
        </svg>
      </TaskIcon>
      <TaskIcon running>
        <svg width={26} height={26} viewBox="0 0 26 26">
          <circle cx={12} cy={12} r={12} fill="#ea4335" />
          <path d="M12 24 A12 12 0 0 1 1.6 6 L8 15 Z" fill="#34a853" />
          <path d="M24 12 A12 12 0 0 1 12 24 L17 14 Z" fill="#fbbc05" />
          <circle cx={12} cy={12} r={5.2} fill="#fff" />
          <circle cx={12} cy={12} r={4} fill="#4285f4" />
          <circle cx={18} cy={20} r={6} fill="#1c2430" />
          <rect x={16.5} y={16} width={3} height={8} fill="#527fa8" />
        </svg>
      </TaskIcon>
      <TaskIcon running>
        <svg width={22} height={20} viewBox="0 0 22 20">
          <path d="M0 1 H9 L11 3 H22 V19 H0Z" fill="#ffc83d" />
          <rect x={0} y={1} width={11} height={3} fill="#e0a325" />
          <path d="M7 13 L11 9 L15 13 V19 H13 V15 H9 V19 H7Z" fill="#2a9bda" />
        </svg>
      </TaskIcon>
      <TaskIcon running>
        <svg width={24} height={24} viewBox="0 0 24 24">
          <rect width={24} height={24} rx={5} fill="#111" />
          <path d="M4 8 Q6 17 9 17 Q12 17 12 12 Q12 7 15 7 Q20 7 20 12 Q20 17 15 17 Q12 17 12 12 Q12 8 9 7" fill="none" stroke="#1e8bf0" strokeWidth={2.6} />
          <path d="M15 7 Q20 7 20 12" fill="none" stroke="#2fd0a6" strokeWidth={2.6} />
        </svg>
      </TaskIcon>
      <TaskIcon>
        <svg width={24} height={24} viewBox="0 0 24 24">
          <path d="M17 1 L23 4 V20 L17 23 L6 13 L2 16 L0 15 V9 L2 8 L6 11Z M17 7 L10 12 L17 17Z" fill="#1f9cf0" />
        </svg>
      </TaskIcon>
      <TaskIcon>
        <svg width={24} height={24} viewBox="0 0 24 24">
          <path d="M12 0 L16 4 L12 8 L8 4Z" fill="#e2564f" />
          <path d="M0 12 L6 6 L11 12 L6 18Z" fill="#5a9cf2" />
          <path d="M13 12 L18 6 L24 12 L18 18Z" fill="#5fae4e" />
          <path d="M12 14 L17 19 L12 24 L7 19Z" fill="#f2d565" />
        </svg>
      </TaskIcon>
      <TaskIcon>
        <svg width={22} height={24} viewBox="0 0 22 24">
          <path d="M11 0 L22 6 V18 L11 24 L0 18 V6Z" fill="#5f3aa0" />
          <path d="M5 17 V7 L11 12 L17 7 V17" fill="none" stroke="#fff" strokeWidth={2.4} />
        </svg>
      </TaskIcon>
      <TaskIcon running>
        <svg width={24} height={24} viewBox="0 0 24 24">
          <path d="M2 2 L14 0 L24 6 L22 22 L6 24 L0 14Z" fill="#f0348c" />
          <path d="M16 1 L24 6 L22 20 Z" fill="#0f8df0" />
          <rect x={4} y={4} width={16} height={16} fill="#111" />
          <text x={6} y={13} fontSize={8} fontWeight={700} fill="#fff" fontFamily={SANS}>IJ</text>
          <rect x={6} y={16} width={7} height={1.4} fill="#fff" />
        </svg>
      </TaskIcon>
      <TaskIcon running>
        <svg width={24} height={24} viewBox="0 0 24 24">
          <rect x={1} width={22} height={24} rx={4} fill="#0b0b0b" />
          <path d="M14 5 Q8 9 9 13 M15 11 Q16 15 10 19" fill="none" stroke="#e8413a" strokeWidth={1.2} />
        </svg>
      </TaskIcon>
      <TaskIcon running>
        <svg width={24} height={24} viewBox="0 0 24 24">
          <circle cx={12} cy={12} r={12} fill="#1d91e8" />
          <path d="M4 12 H19 Q20 16 15 18 Q7 20 4 12Z" fill="#fff" />
          <rect x={7} y={9} width={2.5} height={2.5} fill="#fff" />
          <rect x={10} y={9} width={2.5} height={2.5} fill="#fff" />
          <rect x={13} y={9} width={2.5} height={2.5} fill="#fff" />
          <rect x={10} y={6} width={2.5} height={2.5} fill="#fff" />
        </svg>
      </TaskIcon>
      <TaskIcon>
        <svg width={24} height={24} viewBox="0 0 24 24">
          <circle cx={12} cy={12} r={12} fill="#1ed760" />
          <path d="M5 8 Q12 6 19 9 M6 12 Q12 10.5 18 13 M7 16 Q12 14.5 17 17" fill="none" stroke="#111" strokeWidth={1.8} strokeLinecap="round" />
        </svg>
      </TaskIcon>
    </div>

    <div className="ml-auto w-[508px] shrink-0 flex items-center text-[13px] whitespace-nowrap">
      <div className="w-[32px] flex justify-center shrink-0">
        <svg width={18} height={16} viewBox="0 0 18 16" fill="none" stroke="#b8c0c8" strokeWidth={1}>
          <rect x={1} y={5} width={16} height={10} rx={1} />
          <path d="M4 8 H14 M4 10.5 H14 M6 13 H12 M9 5 V3 H16" />
        </svg>
      </div>
      <svg width={28} height={28} viewBox="0 0 26 26" className="ml-[30px] shrink-0">
        <circle cx={12} cy={14} r={9} fill="#f08b2c" />
        <ellipse cx={7} cy={7} rx={6} ry={4} fill="#c9daf0" />
        <ellipse cx={18} cy={20} rx={7} ry={4} fill="#c9daf0" />
        <circle cx={18} cy={6} r={6} fill="#c4281c" />
        <text x={18} y={9} fontSize={8} fontWeight={700} fill="#fff" textAnchor="middle" fontFamily={SANS}>1</text>
      </svg>
      <span className="ml-[6px] w-[38px] shrink-0">22°C</span>
      <span className="w-[107px] shrink-0">Parzial. sereno</span>
      <TraySlot><ChevronUp size={18} strokeWidth={1.2} /></TraySlot>
      <TraySlot>
        <svg width={14} height={18} viewBox="0 0 14 18" fill="none" stroke="#fff" strokeWidth={1}>
          <rect x={1} y={5} width={8} height={8} rx={1} />
          <path d="M9 8 L13 6 V12 L9 10 M2 2 H8 M2 16 H8" />
        </svg>
      </TraySlot>
      <TraySlot>
        <svg width={14} height={20} viewBox="0 0 14 20" fill="none" stroke="#fff">
          <rect x={3.5} y={1} width={7} height={12} rx={3.5} fill="#fff" />
          <path d="M1 9 Q1 15 7 15 Q13 15 13 9 M7 15 V18 M4 18.5 H10" />
        </svg>
      </TraySlot>
      <TraySlot>
        <svg width={17} height={16} viewBox="0 0 17 16" fill="none" stroke="#fff" strokeWidth={1}>
          <path d="M2 1 H15 V11 H5 M2 1 V6 M1 1 H6 V6 H1Z M10 11 V15 M6 15 H14" />
        </svg>
      </TraySlot>
      <TraySlot>
        <svg width={17} height={16} viewBox="0 0 17 16" fill="none" stroke="#fff" strokeWidth={1}>
          <path d="M1 5 H4 L8 1 V15 L4 11 H1Z M10.5 5 Q12 8 10.5 11 M13 3 Q15 8 13 13" />
        </svg>
      </TraySlot>
      <TraySlot>
        <svg width={16} height={18} viewBox="0 0 16 18">
          <rect x={1} y={3} width={4} height={3} fill="#fff" />
          <rect x={9} y={1} width={4} height={3} fill="#fff" />
          <rect x={10} y={6} width={4} height={3} fill="#fff" />
          <rect x={0} y={9} width={9} height={9} fill="#e01c38" />
          <text x={4.5} y={16.5} fontSize={8} fontWeight={700} fill="#fff" textAnchor="middle" fontFamily={SANS}>6</text>
        </svg>
      </TraySlot>
      <div className="w-[70px] shrink-0 text-center text-[12px] leading-[17px]">
        <div>13:22</div>
        <div>17/07/2023</div>
      </div>
      <div className="w-[42px] shrink-0 flex justify-center">
        <div className="relative w-[24px] h-[24px]">
          <svg width={17} height={15} viewBox="0 0 17 15" className="absolute left-0 top-0" fill="#fff">
            <path d="M0 0 H17 V11 H6 L3 14 V11 H0Z" />
          </svg>
          <div className="absolute left-[7px] top-[7px] w-[17px] h-[17px] rounded-full bg-[#333] border border-[#888] flex items-center justify-center text-[10px] font-semibold">2</div>
        </div>
      </div>
    </div>
  </div>
)

const App = () => {
  return (
    <div className="w-[1920px] h-[1080px] overflow-hidden flex flex-col relative bg-[#e6e6e6]">
      <TabBar />
      <AddressBar />
      <div className="flex-1 flex min-h-0">
        <div className="flex-1 flex flex-col min-w-0">
          <PdfToolbar />
          <div className="flex-1 min-h-0 relative">
            <PdfPage />
            <Scrollbar />
          </div>
        </div>
      </div>
      <Taskbar />
      <div className="absolute right-0 top-[70px] bottom-[40px] flex">
        <Sidebar />
      </div>
      <NotificationCard />
    </div>
  )
}

export default App
